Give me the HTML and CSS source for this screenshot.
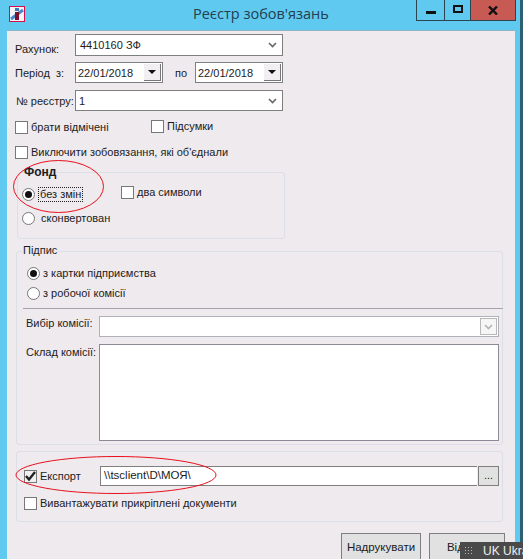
FILE: index.html
```html
<!DOCTYPE html>
<html lang="uk">
<head>
    <meta charset="UTF-8">
    <meta name="viewport" content="width=device-width, initial-scale=1.0">
    <title>Реєстр зобов'язань</title>
    <link rel="stylesheet" href="styles.css">
</head>
<body>
    <div class="window">
        <div class="titlebar">
            <svg class="app-icon" width="16" height="16" viewBox="0 0 16 16">
                <rect x="0.5" y="0.5" width="15" height="15" fill="#f4f4f8" stroke="#d0104c"/>
                <path d="M2 13 L14 4" stroke="#4a86c8" stroke-width="3"/>
                <rect x="6" y="6" width="4" height="8" fill="#7a1030"/>
                <rect x="6" y="2" width="4" height="3" fill="#3a78c0"/>
            </svg>
            <div class="title">Реєстр зобов'язань</div>
            <div class="win-buttons">
                <div class="win-btn btn-min"><span class="min-glyph"></span></div>
                <div class="win-btn btn-max"><span class="max-glyph"></span></div>
                <div class="win-btn btn-close">
                    <svg width="10" height="9" viewBox="0 0 10 9"><path d="M1 0.5 L9 8.5 M9 0.5 L1 8.5" stroke="#111" stroke-width="2.4"/></svg>
                </div>
            </div>
        </div>

        <div class="client">
            <div class="row row-account">
                <label class="lbl lbl-main">Рахунок:</label>
                <div class="combo combo-main">
                    <span>4410160 ЗФ</span>
                    <svg class="chevron" width="9" height="6" viewBox="0 0 9 6"><path d="M1 1 L4.5 4.5 L8 1" fill="none" stroke="#666" stroke-width="1.6"/></svg>
                </div>
            </div>

            <div class="row row-period">
                <label class="lbl lbl-main">Період &nbsp;з:</label>
                <div class="date">
                    <span>22/01/2018</span>
                    <div class="date-btn"><span class="arrow"></span></div>
                </div>
                <label class="lbl lbl-to">по</label>
                <div class="date">
                    <span>22/01/2018</span>
                    <div class="date-btn"><span class="arrow"></span></div>
                </div>
            </div>

            <div class="row row-number">
                <label class="lbl lbl-main lbl-number">№ реєстру:</label>
                <div class="combo combo-number">
                    <span>1</span>
                    <svg class="chevron" width="9" height="6" viewBox="0 0 9 6"><path d="M1 1 L4.5 4.5 L8 1" fill="none" stroke="#666" stroke-width="1.6"/></svg>
                </div>
            </div>

            <div class="row row-checks">
                <div class="check check-marked"><span class="box"></span>брати відмічені</div>
                <div class="check"><span class="box"></span>Підсумки</div>
            </div>

            <div class="row row-exclude">
                <div class="check"><span class="box"></span>Виключити зобовязання, які об'єднали</div>
            </div>

            <div class="fieldset fund">
                <div class="legend legend-bold">Фонд</div>
                <div class="fund-body">
                    <div class="fund-radios">
                        <div class="radio"><span class="dot dot-on"></span><span class="focused">без змін</span></div>
                        <div class="radio radio-second"><span class="dot"></span><span class="radio-text">сконвертован</span></div>
                    </div>
                    <div class="check check-two"><span class="box"></span>два символи</div>
                </div>
            </div>

            <div class="fieldset sign">
                <div class="legend">Підпис</div>
                <div class="sign-radios">
                    <div class="radio"><span class="dot dot-on"></span>з картки підприємства</div>
                    <div class="radio"><span class="dot"></span>з робочої комісії</div>
                </div>
                <div class="commission">
                    <div class="row row-choice">
                        <label class="lbl lbl-comm">Вибір комісії:</label>
                        <div class="combo combo-comm">
                            <div class="combo-btn">
                                <svg width="9" height="6" viewBox="0 0 9 6"><path d="M1 1 L4.5 4.5 L8 1" fill="none" stroke="#b4b4b4" stroke-width="1.6"/></svg>
                            </div>
                        </div>
                    </div>
                    <div class="row row-staff">
                        <label class="lbl lbl-comm">Склад комісії:</label>
                        <div class="memo"></div>
                    </div>
                </div>
            </div>

            <div class="fieldset export">
                <div class="row row-export">
                    <div class="check check-export"><span class="box box-on">
                        <svg width="11" height="10" viewBox="0 0 11 10"><path d="M1 5 L4 8.5 L10 1" fill="none" stroke="#222" stroke-width="2.4"/></svg>
                    </span>Експорт</div>
                    <div class="path-input">\\tsclient\D\МОЯ\</div>
                    <div class="browse">...</div>
                </div>
                <div class="check"><span class="box"></span>Вивантажувати прикріплені документи</div>
            </div>

            <div class="actions">
                <div class="action">Надрукувати</div>
                <div class="action action-close">Відміна</div>
            </div>
        </div>

        <!-- червоні позначки поверх скріншота -->
        <svg class="marks" width="523" height="559" viewBox="0 0 523 559">
            <ellipse cx="58.5" cy="186.5" rx="45" ry="26" fill="none" stroke="#e8101c"/>
            <ellipse cx="116" cy="475" rx="100" ry="18.5" fill="none" stroke="#e8101c"/>
        </svg>

        <div class="langbar"><span class="grip"></span>UK Ukra</div>
    </div>
</body>
</html>
```

FILE: styles.css
```css
:root {
    --frame: #60c9f0;
    --panel: #efeaee;
    --edge: #7f7f7f;
    --text: #1c1c1c;
}

* {
    margin: 0;
    padding: 0;
    box-sizing: border-box;
}

html, body {
    height: 559px;
    overflow: hidden;
}

body {
    font-family: "Liberation Sans", Arial, sans-serif;
    font-size: 11px;
    line-height: 14px;
    color: var(--text);
}

.window {
    position: relative;
    width: 523px;
    height: 559px;
    background-color: var(--frame);
    border-right: 3px solid #2f5f72;
    display: flex;
    flex-direction: column;
}

.titlebar {
    height: 30px;
    flex-shrink: 0;
    display: flex;
    align-items: flex-start;
    padding-left: 9px;
}

.app-icon {
    margin-top: 6px;
}

.title {
    flex: 1;
    margin-top: 3px;
    padding-left: 168px;
    font-family: "Open Sans", "Noto Sans", sans-serif;
    font-size: 14.5px;
    line-height: 22px;
    color: #22404e;
}

.win-buttons {
    display: flex;
    height: 21px;
    margin-right: 4px;
    border: 1px solid #2c4450;
    border-top: none;
}

.win-btn {
    display: flex;
    align-items: center;
    justify-content: center;
}

.btn-min {
    width: 28px;
    border-right: 1px solid #2c4450;
}

.btn-max {
    width: 26px;
    border-right: 1px solid #2c4450;
}

.btn-close {
    width: 44px;
    background-color: #c75a52;
}

.min-glyph {
    width: 10px;
    height: 3px;
    margin-top: 5px;
    background-color: #111;
}

.max-glyph {
    width: 10px;
    height: 8px;
    margin-bottom: 2px;
    border: 2px solid #111;
}

.client {
    flex: 1;
    margin-left: 7px;
    margin-right: 5px;
    background-color: var(--panel);
    border-top: 1px solid #8fb4c6;
    padding: 3px 0 0 8px;
    overflow: hidden;
}

.row {
    display: flex;
    align-items: center;
}

.lbl-main {
    width: 60px;
    flex-shrink: 0;
    padding-top: 1px;
}

.combo {
    display: flex;
    align-items: center;
    justify-content: space-between;
    background-color: white;
    border: 1px solid var(--edge);
}

.combo-main {
    width: 208px;
    height: 22px;
    padding: 0 5px 0 4px;
}

.combo-number {
    width: 208px;
    height: 21px;
    padding: 0 5px 0 3px;
}

.row-account .lbl {
    padding-top: 7px;
}

.row-period {
    margin-top: 6px;
}

.date {
    width: 88px;
    height: 21px;
    display: flex;
    align-items: center;
    justify-content: space-between;
    background-color: white;
    border: 1px solid var(--edge);
    padding: 0 1px 0 2px;
}

.date-btn {
    width: 17px;
    height: 17px;
    display: flex;
    align-items: center;
    justify-content: center;
    background-color: #f2eff2;
    border-right: 1px solid #777;
    border-bottom: 1px solid #777;
}

.arrow {
    width: 0;
    height: 0;
    border-left: 4px solid transparent;
    border-right: 4px solid transparent;
    border-top: 4px solid #111;
}

.lbl-to {
    width: 32px;
    padding-left: 12px;
    padding-top: 1px;
}

.row-number {
    margin-top: 7px;
}

.lbl-number {
    padding-left: 1px;
    white-space: nowrap;
}

.check {
    display: flex;
    align-items: center;
    gap: 3px;
    height: 14px;
}

.box {
    width: 13px;
    height: 13px;
    flex-shrink: 0;
    display: flex;
    align-items: center;
    justify-content: center;
    background-color: white;
    border: 1px solid #777;
}

.row-checks {
    margin-top: 8px;
    align-items: flex-start;
}

.check-marked {
    width: 136px;
    margin-top: 1px;
}

.row-exclude {
    margin-top: 11px;
}

.fieldset {
    position: relative;
    border: 1px solid #dcdfe6;
    border-radius: 3px;
}

.legend {
    position: absolute;
    top: -9px;
    left: 5px;
    padding: 0 1px;
    background-color: var(--panel);
}

.legend-bold {
    top: -8px;
    left: 5px;
    font-weight: bold;
    font-size: 12px;
    background: none;
}

.fund {
    width: 268px;
    height: 67px;
    margin-top: 13px;
    margin-left: 2px;
}

.fund-body {
    display: flex;
    padding: 11px 0 0 4px;
}

.fund-radios {
    width: 99px;
}

.radio {
    display: flex;
    align-items: center;
    gap: 3px;
    height: 20px;
}

.radio-second {
    margin-top: 4px;
}

.radio-text {
    padding-left: 3px;
}

.dot {
    width: 13px;
    height: 13px;
    flex-shrink: 0;
    display: flex;
    align-items: center;
    justify-content: center;
    background-color: white;
    border: 1px solid #777;
    border-radius: 50%;
}

.dot-on::after {
    content: "";
    width: 7px;
    height: 7px;
    border-radius: 50%;
    background-color: #111;
}

.focused {
    padding: 0 1px;
    border: 1px dotted #222;
    line-height: 13px;
}

.check-two {
    margin-top: 1px;
}

.sign {
    width: 487px;
    height: 194px;
    margin-top: 12px;
    margin-left: 1px;
}

.sign-radios {
    display: flex;
    flex-direction: column;
    padding: 11px 0 0 10px;
}

.commission {
    margin-top: 5px;
    margin-left: 6px;
    margin-right: -1px;
    height: 136px;
    border-top: 1px solid #a4a4aa;
    padding: 7px 3px 0 3px;
}

.lbl-comm {
    width: 73px;
    flex-shrink: 0;
}

.row-choice {
    align-items: flex-start;
}

.combo-comm {
    width: 400px;
    height: 21px;
    justify-content: flex-end;
    border-color: #b0b0b8;
    padding-right: 1px;
}

.combo-btn {
    width: 17px;
    height: 17px;
    display: flex;
    align-items: center;
    justify-content: center;
    border: 1px solid #b8b8b8;
    background-color: #f6f6f6;
}

.row-staff {
    margin-top: 7px;
    align-items: flex-start;
}

.row-staff .lbl {
    padding-top: 1px;
}

.memo {
    width: 400px;
    height: 97px;
    background-color: white;
    border: 1px solid #8a8a98;
}

.export {
    width: 487px;
    height: 71px;
    margin-top: 6px;
    margin-left: 1px;
    padding: 14px 0 0 7px;
}

.row-export {
    margin-bottom: 10px;
}

.check-export {
    width: 76px;
    flex-shrink: 0;
}

.box-on {
    background-color: #f0f0f0;
}

.path-input {
    width: 377px;
    height: 20px;
    padding-left: 3px;
    line-height: 17px;
    background-color: white;
    border: 1px solid var(--edge);
    border-right: none;
    font-size: 11.5px;
}

.browse {
    width: 21px;
    height: 20px;
    margin-left: 1px;
    text-align: center;
    line-height: 16px;
    background-color: #e1e1e1;
    border: 1px solid var(--edge);
}

.actions {
    display: flex;
    gap: 8px;
    margin-top: 11px;
    margin-left: 326px;
}

.action {
    width: 80px;
    height: 40px;
    flex-shrink: 0;
    padding-top: 6px;
    text-align: center;
    font-size: 11.5px;
    background-color: #e1e1e1;
    border: 1px solid var(--edge);
}

.action-close {
    width: 76px;
}

.marks {
    position: absolute;
    top: 0;
    left: 0;
    pointer-events: none;
}

.langbar {
    position: absolute;
    right: -3px;
    bottom: 0;
    width: 63px;
    height: 17px;
    display: flex;
    align-items: center;
    gap: 11px;
    padding-left: 4px;
    background-color: #4a4a4a;
    color: #f0f0f0;
    font-size: 12px;
    white-space: nowrap;
    overflow: hidden;
}

.grip {
    width: 8px;
    height: 10px;
    flex-shrink: 0;
    background-image: radial-gradient(#b8b8b8 1px, transparent 1px);
    background-size: 3px 3px;
}
```
